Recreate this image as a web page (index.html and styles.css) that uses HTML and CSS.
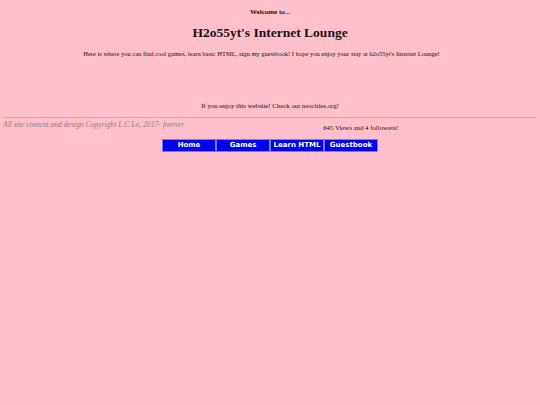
FILE: index.html
```html
<!DOCTYPE html>
<html>
<head>
<meta charset="utf-8">
<title>H2o55yt's Internet Lounge</title>
<link rel="stylesheet" href="styles.css">
</head>
<body>
<p class="welcome">Welcome to...</p>
<h1 class="title">H2o55yt's Internet Lounge</h1>
<p class="intro">Here is where you can find cool games, learn basic HTML, sign my guestbook! I hope you enjoy your stay at h2o55yt's Internet Lounge!</p>
<p class="neo">If you enjoy this website! Check out neocities.org!</p>
<hr class="rule">
<div class="footer">
  <span class="copy">All site content and design Copyright L.C Lo, 2017- forever</span>
  <p class="count">645 Views and 4 followers!</p>
</div>
<nav class="nav">
  <a class="btn" href="#">Home</a><a class="btn" href="#">Games</a><a class="btn" href="#">Learn HTML</a><a class="btn" href="#">Guestbook</a>
</nav>
</body>
</html>
```
FILE: styles.css
```css
html, body {
  background: #ffc0cb;
}
body {
  margin: 0 3px;
  font-family: "Liberation Serif", "Times New Roman", serif;
  color: #1a1414;
}
p, h1 { margin: 0; }
.welcome {
  margin-top: 8px;
  text-align: center;
  font-weight: bold;
  font-size: 7px;
  line-height: 8px;
}
.title {
  margin-top: 8px;
  text-align: center;
  font-size: 13.5px;
  line-height: 18px;
  font-weight: bold;
}
.intro {
  margin-top: 8px;
  padding-right: 17px;
  text-align: center;
  font-size: 6.5px;
  line-height: 8px;
}
.neo {
  margin-top: 44px;
  text-align: center;
  font-size: 6.8px;
  line-height: 8px;
}
.rule {
  margin: 7px 1px 0 0;
  border: 0;
  border-top: 1px solid #d3a8b1;
  height: 0;
}
.footer {
  overflow: hidden;
}
.copy {
  float: left;
  margin-top: 1px;
  font-style: italic;
  font-size: 7.6px;
  line-height: 12px;
  color: #8f7f85;
}
.count {
  padding-top: 6px;
  text-align: center;
  font-size: 6.8px;
  line-height: 8px;
}
.nav {
  margin-top: 7px;
  display: flex;
  justify-content: center;
}
.btn {
  box-sizing: border-box;
  width: 54px;
  height: 13px;
  background: #0000f0;
  border: 1px solid #7a7aff;
  color: #ffffff;
  text-decoration: none;
  font-family: "DejaVu Sans", sans-serif;
  font-weight: bold;
  font-size: 7px;
  line-height: 11px;
  text-align: center;
  white-space: nowrap;
}
```
